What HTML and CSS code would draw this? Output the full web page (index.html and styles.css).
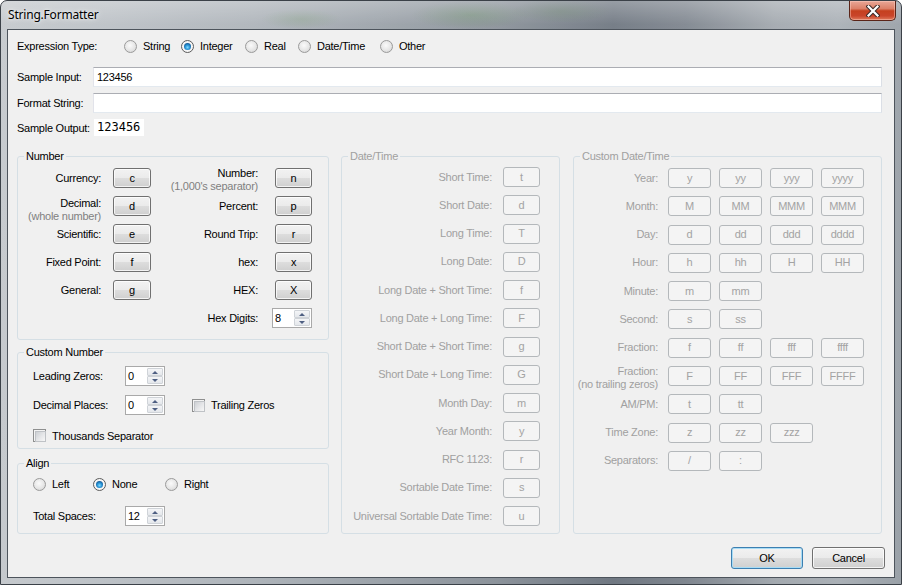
FILE: index.html
```html
<!DOCTYPE html>
<html lang="en">
<head>
<meta charset="utf-8">
<title>String.Formatter</title>
<link rel="stylesheet" href="styles.css">
</head>
<body>
<div class="window">
  <div class="titlebar">
    <span class="title">String.Formatter</span>
    <div class="close">
      <svg width="14" height="12" viewBox="0 0 14 12">
        <path d="M2.5 1.5 L11.5 10.5 M11.5 1.5 L2.5 10.5" stroke="#3b2a28" stroke-width="4.2" stroke-linecap="square" fill="none"/>
        <path d="M2.5 1.5 L11.5 10.5 M11.5 1.5 L2.5 10.5" stroke="#ffffff" stroke-width="2.2" stroke-linecap="square" fill="none"/>
      </svg>
    </div>
  </div>
  <div class="client">
    <div class="expr">
      <span>Expression Type:</span>
      <label class="opt"><span class="radio"></span>String</label>
      <label class="opt"><span class="radio on"></span>Integer</label>
      <label class="opt"><span class="radio"></span>Real</label>
      <label class="opt"><span class="radio"></span>Date/Time</label>
      <label class="opt"><span class="radio"></span>Other</label>
    </div>
    <div class="field first">
      <span>Sample Input:</span>
      <div class="tb">123456</div>
    </div>
    <div class="field">
      <span>Format String:</span>
      <div class="tb"></div>
    </div>
    <div class="field out">
      <span>Sample Output:</span>
      <div class="out-val">123456</div>
    </div>

    <div class="groups">
      <div class="col-left">
        <div class="group g-number">
          <span class="legend">Number</span>
          <div class="num-grid">
            <span class="lbl l-left">Currency:</span>
            <button class="btn">c</button>
            <span class="lbl l-right two"><span>Number:</span><span class="sub">(1,000's separator)</span></span>
            <button class="btn">n</button>

            <span class="lbl l-left first-line"><span>Decimal:</span><span class="sub">(whole number)</span></span>
            <button class="btn">d</button>
            <span class="lbl l-right">Percent:</span>
            <button class="btn">p</button>

            <span class="lbl l-left">Scientific:</span>
            <button class="btn">e</button>
            <span class="lbl l-right">Round Trip:</span>
            <button class="btn">r</button>

            <span class="lbl l-left">Fixed Point:</span>
            <button class="btn">f</button>
            <span class="lbl l-right">hex:</span>
            <button class="btn">x</button>

            <span class="lbl l-left">General:</span>
            <button class="btn">g</button>
            <span class="lbl l-right">HEX:</span>
            <button class="btn">X</button>

            <span class="lbl l-right hexd">Hex Digits:</span>
            <div class="spin hexspin"><span class="spin-val">8</span><span class="spin-btns"><span class="up"></span><span class="down"></span></span></div>
          </div>
        </div>

        <div class="group g-custom">
          <span class="legend">Custom Number</span>
          <div class="cn-row r1">
            <span class="cn-lbl">Leading Zeros:</span>
            <div class="spin"><span class="spin-val">0</span><span class="spin-btns"><span class="up"></span><span class="down"></span></span></div>
          </div>
          <div class="cn-row r2">
            <span class="cn-lbl">Decimal Places:</span>
            <div class="spin"><span class="spin-val">0</span><span class="spin-btns"><span class="up"></span><span class="down"></span></span></div>
            <label class="chk-opt trailing"><span class="check"></span>Trailing Zeros</label>
          </div>
          <div class="cn-row r3">
            <label class="chk-opt"><span class="check"></span>Thousands Separator</label>
          </div>
        </div>

        <div class="group g-align">
          <span class="legend">Align</span>
          <div class="al-row">
            <label class="opt al-left"><span class="radio"></span>Left</label>
            <label class="opt al-none"><span class="radio on"></span>None</label>
            <label class="opt"><span class="radio"></span>Right</label>
          </div>
          <div class="cn-row al-r2">
            <span class="cn-lbl">Total Spaces:</span>
            <div class="spin"><span class="spin-val">12</span><span class="spin-btns"><span class="up"></span><span class="down"></span></span></div>
          </div>
        </div>
      </div>

      <div class="group g-dt disabled">
        <span class="legend">Date/Time</span>
        <div class="dt-grid">
          <span class="lbl">Short Time:</span><button class="btn" disabled>t</button>
          <span class="lbl">Short Date:</span><button class="btn" disabled>d</button>
          <span class="lbl">Long Time:</span><button class="btn" disabled>T</button>
          <span class="lbl">Long Date:</span><button class="btn" disabled>D</button>
          <span class="lbl">Long Date + Short Time:</span><button class="btn" disabled>f</button>
          <span class="lbl">Long Date + Long Time:</span><button class="btn" disabled>F</button>
          <span class="lbl">Short Date + Short Time:</span><button class="btn" disabled>g</button>
          <span class="lbl">Short Date + Long Time:</span><button class="btn" disabled>G</button>
          <span class="lbl">Month Day:</span><button class="btn" disabled>m</button>
          <span class="lbl">Year Month:</span><button class="btn" disabled>y</button>
          <span class="lbl">RFC 1123:</span><button class="btn" disabled>r</button>
          <span class="lbl">Sortable Date Time:</span><button class="btn" disabled>s</button>
          <span class="lbl">Universal Sortable Date Time:</span><button class="btn" disabled>u</button>
        </div>
      </div>

      <div class="group g-cdt disabled">
        <span class="legend">Custom Date/Time</span>
        <div class="cdt-grid">
          <span class="lbl">Year:</span><button class="btn" disabled>y</button><button class="btn" disabled>yy</button><button class="btn" disabled>yyy</button><button class="btn" disabled>yyyy</button>
          <span class="lbl">Month:</span><button class="btn" disabled>M</button><button class="btn" disabled>MM</button><button class="btn" disabled>MMM</button><button class="btn" disabled>MMM</button>
          <span class="lbl">Day:</span><button class="btn" disabled>d</button><button class="btn" disabled>dd</button><button class="btn" disabled>ddd</button><button class="btn" disabled>dddd</button>
          <span class="lbl">Hour:</span><button class="btn" disabled>h</button><button class="btn" disabled>hh</button><button class="btn" disabled>H</button><button class="btn" disabled>HH</button>
          <span class="lbl">Minute:</span><button class="btn" disabled>m</button><button class="btn" disabled>mm</button>
          <span class="lbl">Second:</span><button class="btn" disabled>s</button><button class="btn" disabled>ss</button>
          <span class="lbl">Fraction:</span><button class="btn" disabled>f</button><button class="btn" disabled>ff</button><button class="btn" disabled>fff</button><button class="btn" disabled>ffff</button>
          <span class="lbl two"><span>Fraction:</span><span>(no trailing zeros)</span></span><button class="btn" disabled>F</button><button class="btn" disabled>FF</button><button class="btn" disabled>FFF</button><button class="btn" disabled>FFFF</button>
          <span class="lbl">AM/PM:</span><button class="btn" disabled>t</button><button class="btn" disabled>tt</button>
          <span class="lbl">Time Zone:</span><button class="btn" disabled>z</button><button class="btn" disabled>zz</button><button class="btn" disabled>zzz</button>
          <span class="lbl">Separators:</span><button class="btn" disabled>/</button><button class="btn" disabled>:</button>
        </div>
      </div>
    </div>

    <div class="actions">
      <button class="btn dlg ok">OK</button>
      <button class="btn dlg cancel">Cancel</button>
    </div>
  </div>
</div>
</body>
</html>
```
FILE: styles.css
```css
* { box-sizing: border-box; }
html, body { margin: 0; padding: 0; }
body {
  width: 902px;
  height: 585px;
  overflow: hidden;
  font-family: "Liberation Sans", Arial, sans-serif;
  font-size: 11px;
  letter-spacing: -0.25px;
  color: #000;
  background: #ffffff;
}

.window {
  width: 902px;
  height: 585px;
  border: 1px solid #3b4148;
  border-radius: 7px 7px 0 0;
  display: flex;
  flex-direction: column;
  background:
    linear-gradient(180deg, rgba(255,255,255,0.28) 0%, rgba(255,255,255,0.05) 4%, rgba(255,255,255,0) 100%),
    radial-gradient(ellipse 60px 14px at 470px 14px, rgba(96,140,90,0.35), rgba(96,140,90,0) 100%),
    radial-gradient(ellipse 50px 12px at 560px 10px, rgba(86,120,84,0.30), rgba(86,120,84,0) 100%),
    radial-gradient(ellipse 40px 10px at 300px 18px, rgba(110,150,100,0.25), rgba(110,150,100,0) 100%),
    linear-gradient(90deg, #c5c9cd 0%, #bcc1c6 12%, #aeb4ba 28%, #9ca3aa 42%, #8c939b 55%, #707882 68%, #7f868f 76%, #a3a9af 86%, #aab0b6 93%, #9aa1a8 100%);
}

.titlebar {
  height: 28px;
  flex: none;
  display: flex;
  justify-content: space-between;
  align-items: flex-start;
  padding-left: 7px;
}
.title {
  font-family: "Noto Sans", "Open Sans", sans-serif;
  font-size: 12px;
  letter-spacing: -0.2px;
  line-height: 28px;
  color: #000;
  text-shadow: 0 0 6px rgba(255,255,255,0.9), 0 0 3px rgba(255,255,255,0.7);
}
.close {
  width: 47px;
  height: 20px;
  margin-right: 5px;
  border: 1px solid #5a2418;
  border-top: none;
  border-radius: 0 0 5px 5px;
  background: linear-gradient(180deg, #e9a797 0%, #dc8068 40%, #c5401f 52%, #c9442a 78%, #e07a5c 100%);
  box-shadow: inset 0 0 0 1px rgba(255,210,200,0.45);
  display: flex;
  align-items: center;
  justify-content: center;
}

.client {
  flex: 1;
  margin: 0 6px 6px 6px;
  border: 1px solid #4d545c;
  background: #f0f0f0;
  padding: 0 12px 0 9px;
  display: flex;
  flex-direction: column;
}

/* expression row */
.expr {
  display: grid;
  grid-template-columns: 107px 57px 64px 53px 82px auto;
  align-items: center;
  height: 20px;
  margin-top: 6px;
}
.opt {
  display: flex;
  align-items: center;
  gap: 6px;
}
.radio {
  flex: none;
  width: 13px;
  height: 13px;
  border-radius: 50%;
  border: 1px solid #9a9a9a;
  background: radial-gradient(circle at 45% 40%, #fafafa 0%, #e6e6e6 55%, #cdcdcd 100%);
  display: flex;
  align-items: center;
  justify-content: center;
}
.radio.on {
  border-color: #5b5b5b;
  background: #f6f6f6;
}
.radio.on::after {
  content: "";
  width: 7px;
  height: 7px;
  border-radius: 50%;
  background: radial-gradient(circle at 50% 62%, #7fdcff 0%, #2a94d6 40%, #125b98 75%, #0d3f6e 100%);
}

.field {
  display: grid;
  grid-template-columns: 76px 1fr;
  align-items: center;
  height: 20px;
  margin-top: 6px;
}
.field.first { margin-top: 11px; }
.tb {
  height: 20px;
  border: 1px solid;
  border-color: #abadb3 #dbdfe6 #e3e9ef #e2e3ea;
  background: #fff;
  padding-left: 3px;
  line-height: 18px;
}
.field.out {
  grid-template-columns: 77px auto;
  height: 17px;
}
.out-val {
  width: 50px;
  height: 17px;
  background: #fff;
  font-family: "DejaVu Sans Mono", "Liberation Mono", monospace;
  font-size: 12px;
  letter-spacing: 0;
  line-height: 17px;
  padding-left: 3px;
}

/* groups */
.groups {
  display: flex;
  margin-top: 20px;
  height: 378px;
}
.col-left {
  width: 312px;
  display: flex;
  flex-direction: column;
}
.group {
  position: relative;
  border: 1px solid #d5dfe5;
  border-radius: 3px;
}
.legend {
  position: absolute;
  top: -7px;
  left: 6px;
  padding: 0 2px;
  line-height: 13px;
  background: #f0f0f0;
}
.g-number { height: 184px; }
.g-custom { height: 97px; margin-top: 12px; }
.g-align { height: 71px; margin-top: 14px; }
.g-dt { width: 219px; height: 378px; margin-left: 12px; }
.g-cdt { width: 309px; height: 378px; margin-left: 13px; }

.disabled { color: #a0a0a0; }

.lbl {
  text-align: right;
  align-self: center;
  line-height: 13px;
  white-space: nowrap;
}
.lbl.two, .lbl.first-line {
  display: flex;
  flex-direction: column;
  align-items: flex-end;
}
.sub { color: #808080; }

/* buttons */
.btn {
  font: inherit;
  letter-spacing: inherit;
  color: #000;
  margin: 0;
  padding: 0;
  height: 20px;
  border: 1px solid #707070;
  border-radius: 3px;
  background: linear-gradient(180deg, #f2f2f2 0%, #ebebeb 48%, #dddddd 52%, #cfcfcf 100%);
  box-shadow: inset 0 0 0 1px rgba(255,255,255,0.75);
  display: flex;
  align-items: center;
  justify-content: center;
  line-height: 13px;
}
.btn:disabled {
  border-color: #b4b8bb;
  background: #f4f4f4;
  box-shadow: none;
  color: #a3a3a3;
}

/* number grid */
.num-grid {
  display: grid;
  grid-template-columns: 95px 38px 124px 37px;
  grid-auto-rows: 20px;
  row-gap: 8px;
  padding-top: 11px;
}
.l-left { padding-right: 12px; }
.l-right { padding-right: 17px; }
.lbl.two { padding-top: 3px; }
.lbl.first-line { align-self: start; margin-top: 1px; }
.hexd { grid-column: 3; }
.hexspin { grid-column: 4; justify-self: end; }

/* spinner */
.spin {
  flex: none;
  width: 40px;
  height: 20px;
  border: 1px solid #a9a9a9;
  background: #fff;
  display: flex;
}
.spin-val {
  flex: 1;
  padding-left: 2px;
  line-height: 18px;
}
.spin-btns {
  width: 17px;
  display: flex;
  flex-direction: column;
  padding: 1px 1px 1px 0;
}
.spin-btns span {
  flex: 1;
  border: 1px solid #cfd3d8;
  border-radius: 1px;
  background: linear-gradient(180deg, #f4f5f7 0%, #e4e7eb 100%);
  display: flex;
  align-items: center;
  justify-content: center;
}
.spin-btns .up::after {
  content: "";
  border-left: 3px solid transparent;
  border-right: 3px solid transparent;
  border-bottom: 3px solid #4e5f82;
}
.spin-btns .down::after {
  content: "";
  border-left: 3px solid transparent;
  border-right: 3px solid transparent;
  border-top: 3px solid #4e5f82;
}

/* custom number */
.cn-row {
  display: flex;
  align-items: center;
  height: 20px;
  padding-left: 15px;
}
.cn-row.r1 { margin-top: 13px; }
.cn-row.r2 { margin-top: 9px; }
.cn-row.r3 { margin-top: 14px; height: 13px; }
.cn-lbl { width: 92px; }
.chk-opt {
  display: flex;
  align-items: center;
  gap: 6px;
}
.chk-opt.trailing { margin-left: 27px; }
.check {
  flex: none;
  width: 13px;
  height: 13px;
  border: 1px solid #8e8f8f;
  background: #f4f4f4;
  padding: 1px;
}
.check::after {
  content: "";
  display: block;
  width: 9px;
  height: 9px;
  border: 1px solid #bfc2c6;
  background: linear-gradient(135deg, #cdd0d4 0%, #e6e7e9 55%, #f7f7f7 100%);
}

/* align */
.al-row {
  display: flex;
  align-items: center;
  height: 20px;
  margin-top: 10px;
  padding-left: 15px;
}
.al-left { width: 60px; }
.al-none { width: 72px; }
.cn-row.al-r2 { margin-top: 12px; }

/* date/time */
.dt-grid {
  display: grid;
  grid-template-columns: 161px 37px;
  grid-auto-rows: 20px;
  row-gap: 8.25px;
  padding-top: 10px;
}
.dt-grid .lbl { padding-right: 11px; }

.cdt-grid {
  display: grid;
  grid-template-columns: 86px 43px 43px 43px 43px;
  grid-auto-rows: 20px;
  column-gap: 8px;
  row-gap: 8.3px;
  padding-top: 11px;
}
.cdt-grid .lbl { grid-column: 1; padding-right: 2px; }

/* dialog buttons */
.actions {
  display: flex;
  justify-content: flex-end;
  gap: 9px;
  margin-top: 13px;
  margin-right: -3px;
}
.btn.dlg { height: 22px; }
.btn.ok {
  width: 72px;
  border-color: #3c7fb1;
  box-shadow: inset 0 0 0 1px #a8dcf5;
}
.btn.cancel { width: 73px; }
```
